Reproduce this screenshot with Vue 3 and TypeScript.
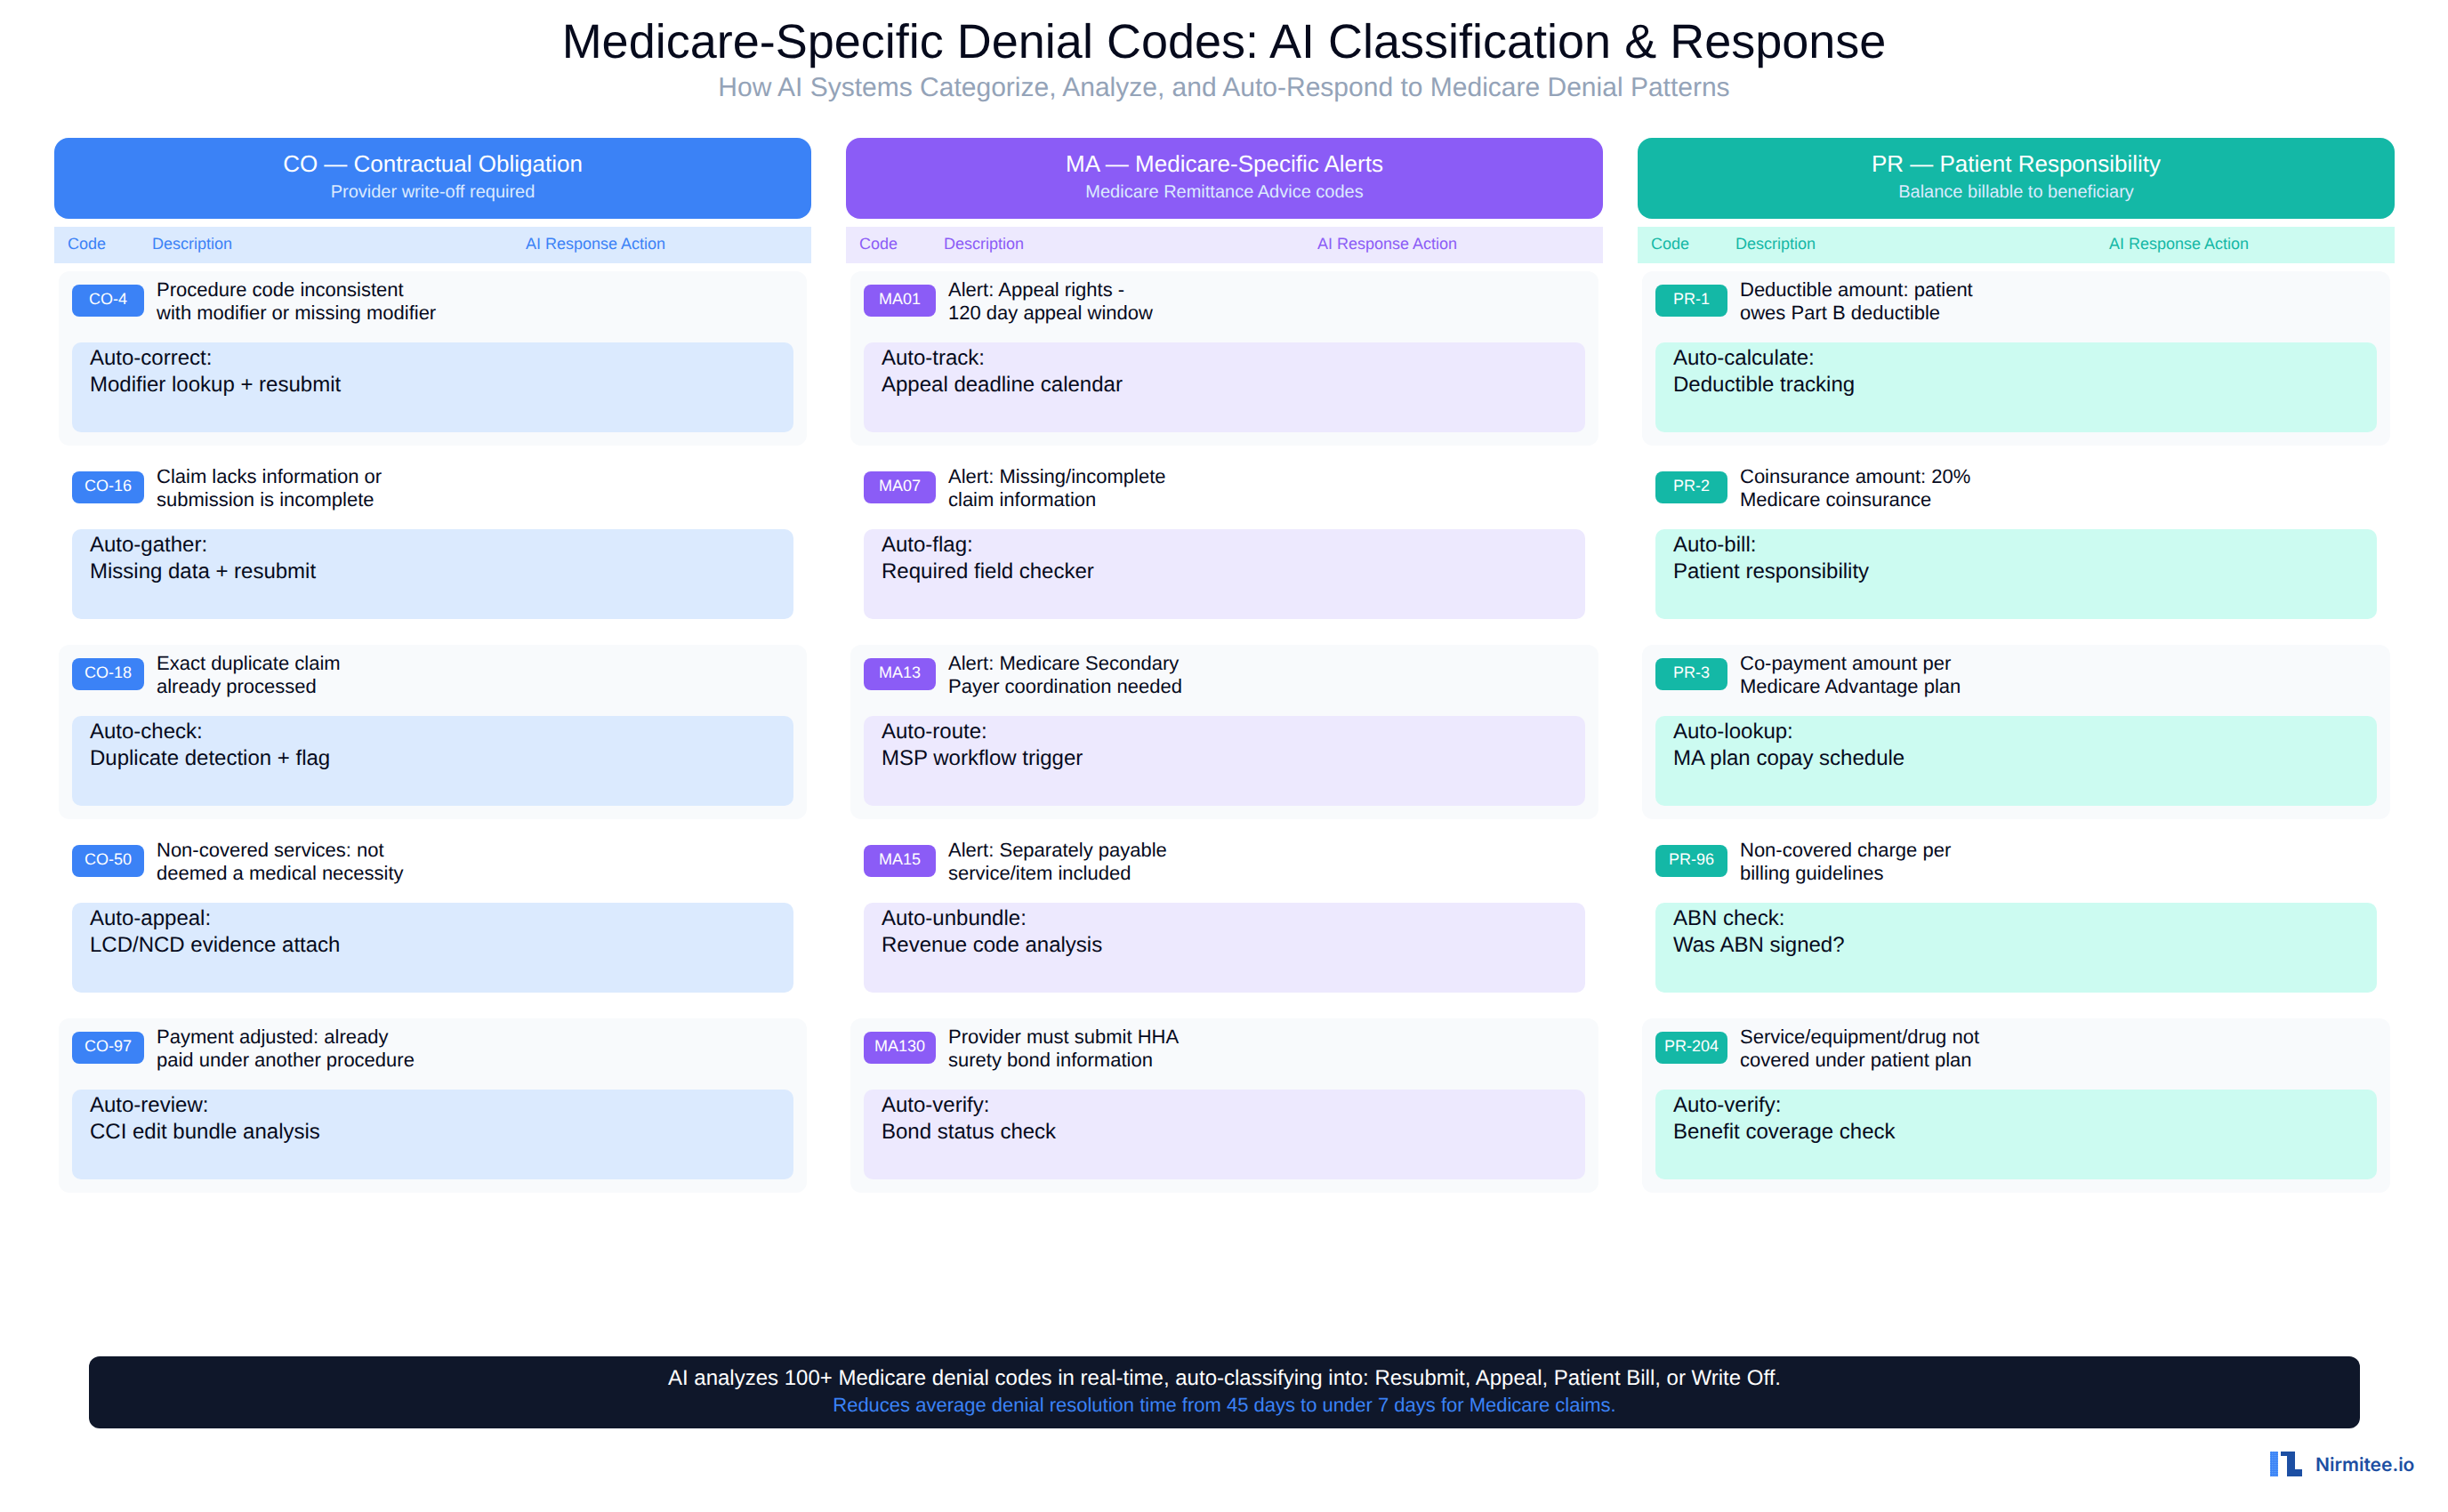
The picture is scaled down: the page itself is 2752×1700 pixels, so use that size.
<script setup lang="ts">
interface Row { code: string; d: [string, string]; a: [string, string] }
interface Col { key: string; title: string; sub: string; rows: Row[] }
const cols: Col[] = [
  { key: 'blue', title: 'CO — Contractual Obligation', sub: 'Provider write-off required', rows: [
    { code: 'CO-4', d: ['Procedure code inconsistent', 'with modifier or missing modifier'], a: ['Auto-correct:', 'Modifier lookup + resubmit'] },
    { code: 'CO-16', d: ['Claim lacks information or', 'submission is incomplete'], a: ['Auto-gather:', 'Missing data + resubmit'] },
    { code: 'CO-18', d: ['Exact duplicate claim', 'already processed'], a: ['Auto-check:', 'Duplicate detection + flag'] },
    { code: 'CO-50', d: ['Non-covered services: not', 'deemed a medical necessity'], a: ['Auto-appeal:', 'LCD/NCD evidence attach'] },
    { code: 'CO-97', d: ['Payment adjusted: already', 'paid under another procedure'], a: ['Auto-review:', 'CCI edit bundle analysis'] },
  ] },
  { key: 'purple', title: 'MA — Medicare-Specific Alerts', sub: 'Medicare Remittance Advice codes', rows: [
    { code: 'MA01', d: ['Alert: Appeal rights -', '120 day appeal window'], a: ['Auto-track:', 'Appeal deadline calendar'] },
    { code: 'MA07', d: ['Alert: Missing/incomplete', 'claim information'], a: ['Auto-flag:', 'Required field checker'] },
    { code: 'MA13', d: ['Alert: Medicare Secondary', 'Payer coordination needed'], a: ['Auto-route:', 'MSP workflow trigger'] },
    { code: 'MA15', d: ['Alert: Separately payable', 'service/item included'], a: ['Auto-unbundle:', 'Revenue code analysis'] },
    { code: 'MA130', d: ['Provider must submit HHA', 'surety bond information'], a: ['Auto-verify:', 'Bond status check'] },
  ] },
  { key: 'teal', title: 'PR — Patient Responsibility', sub: 'Balance billable to beneficiary', rows: [
    { code: 'PR-1', d: ['Deductible amount: patient', 'owes Part B deductible'], a: ['Auto-calculate:', 'Deductible tracking'] },
    { code: 'PR-2', d: ['Coinsurance amount: 20%', 'Medicare coinsurance'], a: ['Auto-bill:', 'Patient responsibility'] },
    { code: 'PR-3', d: ['Co-payment amount per', 'Medicare Advantage plan'], a: ['Auto-lookup:', 'MA plan copay schedule'] },
    { code: 'PR-96', d: ['Non-covered charge per', 'billing guidelines'], a: ['ABN check:', 'Was ABN signed?'] },
    { code: 'PR-204', d: ['Service/equipment/drug not', 'covered under patient plan'], a: ['Auto-verify:', 'Benefit coverage check'] },
  ] },
]
</script>

<template>
  <div class="page">
    <header class="top">
      <h1>Medicare-Specific Denial Codes: AI Classification &amp; Response</h1>
      <p>How AI Systems Categorize, Analyze, and Auto-Respond to Medicare Denial Patterns</p>
    </header>
    <main class="cols">
      <section v-for="c in cols" :key="c.key" class="col" :class="c.key">
        <div class="band">
          <div class="band-title">{{ c.title }}</div>
          <div class="band-sub">{{ c.sub }}</div>
        </div>
        <div class="thead">
          <span class="th-code">Code</span>
          <span class="th-desc">Description</span>
          <span>AI Response Action</span>
        </div>
        <div class="rows">
          <article v-for="r in c.rows" :key="r.code" class="row">
            <div class="line">
              <span class="badge">{{ r.code }}</span>
              <div class="desc"><div>{{ r.d[0] }}</div><div>{{ r.d[1] }}</div></div>
            </div>
            <div class="action"><div>{{ r.a[0] }}</div><div>{{ r.a[1] }}</div></div>
          </article>
        </div>
      </section>
    </main>
    <footer class="foot">
      <div class="foot-main">AI analyzes 100+ Medicare denial codes in real-time, auto-classifying into: Resubmit, Appeal, Patient Bill, or Write Off.</div>
      <div class="foot-sub">Reduces average denial resolution time from 45 days to under 7 days for Medicare claims.</div>
    </footer>
    <div class="brand">
      <svg width="36" height="28" viewBox="0 0 36 28" aria-hidden="true">
        <defs>
          <pattern id="dots" width="2" height="2" patternUnits="userSpaceOnUse">
            <rect width="2" height="2" fill="#3b82f6" />
            <rect width="1" height="1" fill="#60a5fa" />
          </pattern>
        </defs>
        <rect x="0" y="0" width="9" height="28" fill="url(#dots)" />
        <path d="M12 0H28V20H36V28H19V5H12Z" fill="#1d4fa3" />
      </svg>
      <span>Nirmitee.io</span>
    </div>
  </div>
</template>

<style>
html, body { margin: 0; background: #fff; }
</style>

<style scoped>
.page { width: 2752px; height: 1700px; box-sizing: border-box; font-family: "Liberation Sans", Arial, sans-serif; color: #060a1c; overflow: hidden; text-rendering: geometricPrecision; }
.top { height: 155px; text-align: center; }
.top h1 { margin: 0; padding-top: 15px; font-size: 54px; font-weight: 400; line-height: 64px; }
.top p { margin: 0; font-size: 30px; line-height: 40px; color: #94a3b8; }
.cols { display: grid; grid-template-columns: repeat(3, 851px); column-gap: 39px; padding-left: 61px; height: 1370px; }
.blue { --c: #3b82f6; --l: #dbeafe; }
.purple { --c: #8b5cf6; --l: #ede9fe; }
.teal { --c: #14b8a6; --l: #ccfbf1; }
.band { height: 91px; box-sizing: border-box; padding-top: 12px; background: var(--c); border-radius: 16px; color: #fff; text-align: center; }
.band-title { font-size: 26px; line-height: 34px; }
.band-sub { margin-top: 1px; font-size: 20px; line-height: 28px; color: #dbeafe; }
.thead { margin-top: 9px; height: 41px; background: var(--l); color: var(--c); font-size: 18px; line-height: 38px; display: flex; padding-left: 15px; }
.th-code { width: 95px; }
.th-desc { width: 420px; }
.rows { margin-top: 9px; padding: 0 5px; display: flex; flex-direction: column; gap: 14px; }
.row { height: 196px; box-sizing: border-box; padding: 15px 15px 0; border-radius: 12px; }
.row:nth-child(odd) { background: #f8fafc; }
.line { display: flex; height: 60px; gap: 14px; }
.badge { width: 81px; height: 36px; background: var(--c); color: #fff; border-radius: 8px; font-size: 18px; line-height: 32px; text-align: center; flex: none; }
.desc { font-size: 22px; line-height: 26px; margin-top: -7px; }
.action { margin-top: 5px; height: 101px; box-sizing: border-box; background: var(--l); border-radius: 10px; padding: 3px 20px 0; font-size: 24px; line-height: 30px; }
.foot { margin-left: 100px; width: 2553px; height: 81px; box-sizing: border-box; padding-top: 10px; background: #0f172a; border-radius: 12px; text-align: center; }
.foot-main { color: #fff; font-size: 24px; line-height: 30px; }
.foot-sub { color: #3b82f6; font-size: 22px; line-height: 30px; }
.brand { display: flex; align-items: center; gap: 15px; margin: 26px 0 0 2552px; }
.brand span { font-family: Inter, sans-serif; font-weight: 600; font-size: 21px; color: #1d4fa3; padding-top: 2px; }
</style>
